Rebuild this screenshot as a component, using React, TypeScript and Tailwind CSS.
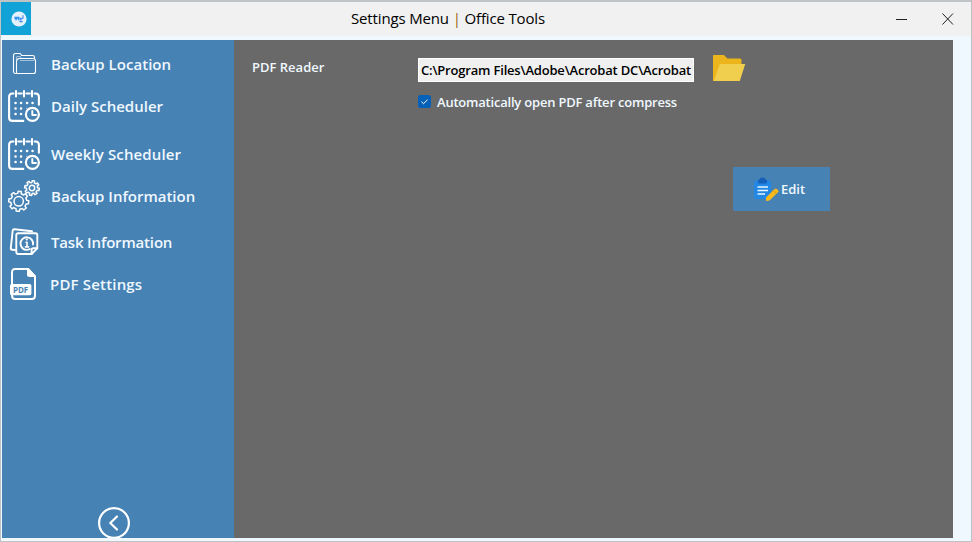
import React from "react";

function FolderIcon() {
  return (
    <svg width="32" height="32" viewBox="0 0 32 32" fill="none" stroke="#fff" strokeWidth="1.1" strokeLinejoin="round">
      <path d="M8.5 25.5H7.2C6 25.5 5.5 24.8 5.5 23.6V7.6C5.5 6.2 6 5.5 7.2 5.5H11.3C12.4 5.5 12.7 5.8 13.1 6.6L13.6 7.5H24.6C25.9 7.5 26.5 8.2 26.5 9.3V10.5" />
      <path d="M8.5 25.5V14C8.5 11.5 9.5 10.5 11.8 10.5H25C26.8 10.5 27.5 11.3 27.5 13V23.5C27.5 24.9 26.9 25.5 25.5 25.5H8.5" />
      <path d="M8.5 13V9.5C8.5 8.8 8.8 8.5 9.5 8.5H12L13.5 10.5M12 12.5H26" strokeOpacity=".5" />
    </svg>
  );
}

function CalendarIcon() {
  return (
    <svg width="32" height="32" viewBox="0 0 32 32" fill="none" stroke="#fff" strokeWidth="2.1" strokeLinecap="round">
      <path d="M5.5 3.5H4.5C2.2 3.5 1.1 4.7 1.1 7V27.4C1.1 29.8 2.2 30.9 4.5 30.9H15.3" />
      <path d="M10.3 3.5H13.7M18.5 3.5H21.8M26.6 3.5H27.5C29.8 3.5 30.9 4.7 30.9 7V14.8" />
      <path d="M8 1.1V6.5M16 1.1V6.5M24 1.1V6.5" />
      <circle cx="24.4" cy="24.4" r="6.5" strokeWidth="2.2" />
      <path d="M24.3 20.9V25H28" strokeWidth="1.9" strokeLinejoin="round" />
      <path d="M7.5 13H7.6M13 13H13.1M19 13H19.1M24.5 13H24.6M7.5 18.5H7.6M13 18.5H13.1M7.5 24H7.6M13 24H13.1" strokeWidth="2.5" />
      <path d="M18.8 18.3H18.9" strokeWidth="1" />
    </svg>
  );
}

function gearPath(cx: number, cy: number, inner: number, outer: number, teeth: number, turn: number) {
  const pts: string[] = [];
  const step = (Math.PI * 2) / teeth;
  for (let i = 0; i < teeth; i++) {
    const a = i * step + turn;
    [[-0.29, inner], [-0.2, outer], [0.2, outer], [0.29, inner]].forEach(([t, r]) => {
      pts.push(`${(cx + Math.cos(a + t * step) * r).toFixed(2)} ${(cy + Math.sin(a + t * step) * r).toFixed(2)}`);
    });
  }
  return `M${pts.join("L")}Z`;
}

function GearsIcon() {
  return (
    <svg width="32" height="32" viewBox="0 0 32 32" fill="none" stroke="#fff" strokeWidth="1.5" strokeLinejoin="round">
      <path d={gearPath(10.7, 21.3, 8, 10.1, 8, 0.1)} />
      <circle cx="10.7" cy="21.3" r="4.7" />
      <path d={gearPath(24, 8, 5.6, 7.4, 8, 0.2)} />
      <circle cx="24" cy="8" r="2.7" />
    </svg>
  );
}

function TaskIcon() {
  return (
    <svg width="32" height="32" viewBox="0 0 32 32" fill="none" stroke="#fff" strokeWidth="1.9" strokeLinejoin="round" strokeLinecap="round">
      <path d="M24 5.3L6.5 3.2C5.4 3.1 4.9 3.5 4.7 4.6L2.8 22C2.7 23.1 3.1 23.6 4.2 23.7L7 24" />
      <path d="M10.2 7.2H27.4C28.7 7.2 29.3 7.8 29.3 9.1V22.3L23.6 28H10.2C8.9 28 8.3 27.4 8.3 26.1V9.1C8.3 7.8 8.9 7.2 10.2 7.2Z" />
      <path d="M29.3 22.3H25.2C24.1 22.3 23.6 22.8 23.6 23.9V28" />
      <path d="M21.8 23C20.9 23.6 19.9 23.9 18.8 23.9A6.3 6.3 0 1 1 25 18.5" />
      <path d="M18 16.2H19V20.7M17.5 20.9H20.5" strokeWidth="1.6" />
      <circle cx="18.8" cy="13.5" r="1.1" fill="#fff" stroke="none" />
    </svg>
  );
}

function PdfIcon() {
  return (
    <svg width="32" height="32" viewBox="0 0 32 32" fill="none">
      <path d="M4 17V4.5C4 2.2 5 1 7.2 1H20L27 8.5V27.5C27 29.8 26 31 23.8 31H7.2C5 31 4 29.8 4 27.5V26" stroke="#fff" strokeWidth="2" />
      <path d="M19 0H20.5L28 8V9H21.5C19.8 9 19 8.2 19 6.5Z" fill="#fff" />
      <rect x="2" y="16" width="21.4" height="11.2" rx="1.7" fill="#fff" />
      <text x="12.6" y="24.8" textAnchor="middle" textLength="15.3" lengthAdjust="spacingAndGlyphs" fill="#4682b4" fontFamily="Open Sans, sans-serif" fontWeight="700" fontSize="8.5">PDF</text>
    </svg>
  );
}

const items = [
  { label: "Backup Location", icon: <FolderIcon />, cls: "tracking-[0.03px]" },
  { label: "Daily Scheduler", icon: <CalendarIcon />, cls: "tracking-[0px]" },
  { label: "Weekly Scheduler", icon: <CalendarIcon />, cls: "tracking-[0.12px]", row: "mt-1.5" },
  { label: "Backup Information", icon: <GearsIcon />, cls: "tracking-[-0.01px]" },
  { label: "Task Information", icon: <TaskIcon />, cls: "tracking-[-0.17px]", row: "mt-1" },
  { label: "PDF Settings", icon: <PdfIcon />, cls: "tracking-[0.18px] -ml-px" },
];

function TitleBar() {
  return (
    <header className="flex h-[34px] shrink-0 bg-[#f1f1f1]">
      <div className="flex h-[33px] w-[30px] items-center justify-center bg-[#11a3d8] pl-[5px]">
        <svg width="16" height="16" viewBox="0 0 16 16">
          <circle cx="8" cy="8" r="7.6" fill="#e4f1fc" />
          <path d="M3.4 5.8H8.5V9.3H6.9V7.7H5.8V9.3H4.3V7.7H3.4Z" fill="#2d91f2" />
          <path d="M9 6.8H10.5V9H9ZM11.4 4.3H12.5V7.8H10.5V6.9H11.4ZM8.4 9.7H11.6V11.3H8.4Z" fill="#3585ef" />
        </svg>
      </div>
      <h1 className="ml-80 w-[212px] whitespace-nowrap text-[15px] leading-[33px] tracking-[-0.15px] text-black">Settings Menu <span className="text-[#96600c]">|</span> Office Tools</h1>
      <div className="ml-auto flex items-center gap-[35px] pr-[17px]">
        <svg width="11" height="12" viewBox="0 0 11 12"><path d="M0 6.5H11" stroke="#222" /></svg>
        <svg width="12" height="12" viewBox="0 0 12 12"><path d="M.5 .5L11 11.5M11 .5L.5 11.5" stroke="#222" fill="none" /></svg>
      </div>
    </header>
  );
}

export default function App() {
  return (
    <div className="flex h-[542px] w-[972px] flex-col overflow-hidden border border-t-2 border-[#bfc3c5] bg-[#f0f8ff] font-['Open_Sans','Noto_Sans',sans-serif]">
      <TitleBar />
      <div className="mt-1 ml-px flex h-[498px] w-[951px]">
        <aside className="flex w-[232px] flex-col overflow-hidden bg-[#4682b4] pt-[3px] text-[15px] font-semibold text-[#f0f8ff]">
          {items.map((item) => (
            <div key={item.label} className={`flex h-[42px] shrink-0 items-center gap-[11px] pl-1.5 ${item.row ?? ""}`}>
              {item.icon}
              <span className={`whitespace-nowrap ${item.cls}`}>{item.label}</span>
            </div>
          ))}
          <svg className="mt-[202px] ml-24 shrink-0" width="32" height="32" viewBox="0 0 32 32" fill="none" stroke="#fff" strokeWidth="2.2" strokeLinecap="round" strokeLinejoin="round">
            <circle cx="16" cy="16" r="14.9" />
            <path d="M19 9.5L12.3 16L19 22.5" />
          </svg>
        </aside>
        <main className="w-[719px] bg-[#696969] text-[13px] font-semibold text-[#f0f8ff]">
          <div className="flex h-[50px] pt-[14px] pl-[18px]">
            <span className="mt-1 w-[166px] leading-[18px]">PDF Reader</span>
            <div className="mt-1 h-6 w-[276px] overflow-hidden border border-white bg-[#f0f0f0] px-0.5 leading-[23px] tracking-[-0.19px] whitespace-nowrap text-black">C:\Program Files\Adobe\Acrobat DC\Acrobat</div>
            <svg className="ml-[19px]" width="33" height="28" viewBox="0 0 33 28">
              <path d="M0 1.2Q0 1 1 1H11L14.5 4.5H27Q28.5 4.5 28.5 6V12L5 27H0Z" fill="#ebb51b" />
              <path d="M6.8 10H32.2L26.8 27H.8Z" fill="#f0cf4e" />
            </svg>
          </div>
          <label className="ml-[184px] flex h-6 items-center">
            <svg className="-mt-px" width="13" height="13" viewBox="0 0 13 13"><rect width="13" height="13" rx="2.5" fill="#0560b7" /><path d="M3.4 6.7L5.5 8.7L9.6 4.7" fill="none" stroke="#fff" /></svg>
            <span className="mt-0.5 ml-1.5 tracking-[-0.21px]">Automatically open PDF after compress</span>
          </label>
          <button className="mt-[53px] ml-[499px] flex h-11 w-[97px] items-center bg-[#4682b4] pl-[21px]">
            <svg width="25" height="26" viewBox="0 0 25 26">
              <rect x="0" y="4.5" width="17" height="18.5" rx="3" fill="#2387e5" />
              <path d="M4 4.5Q4 3.5 5.5 3.5Q6 1.5 8.5 1.5Q11 1.5 11.5 3.5Q13 3.5 13 4.5V6Q13 7.5 11.5 7.5H5.5Q4 7.5 4 6Z" fill="#1560b8" />
              <path d="M3.5 11H14M3.5 14.5H14M3.5 18H11" stroke="#e8f6ff" strokeWidth="1.6" />
              <path d="M12 21.5L20 13.5Q22 12 23.7 13.7T23.7 16.5L15.5 24.5L12 25Z" fill="#f7b91b" />
              <path d="M19 14.5L22.5 18" stroke="#d99b13" />
            </svg>
            <span className="mt-0.5 ml-0.5">Edit</span>
          </button>
        </main>
      </div>
    </div>
  );
}
